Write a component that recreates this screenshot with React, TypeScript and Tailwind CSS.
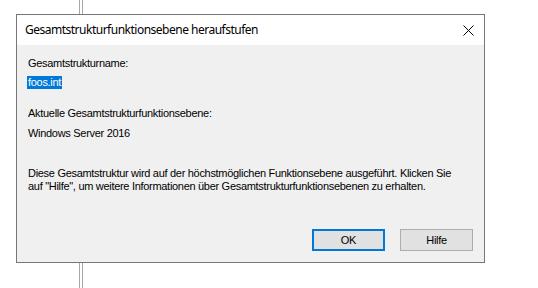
import React from "react";

export default function App() {
  return (
    <div className="relative w-[538px] h-[288px] bg-white overflow-hidden" style={{ fontFamily: '"Liberation Sans", Arial, sans-serif' }}>
      {/* background window edge behind dialog */}
      <div className="absolute left-[79px] top-0 h-full w-[4px] border-l border-r border-[#a8a8a8] bg-white" />
      <div className="relative pt-[14px] pl-[16px]">
        <div className="w-[469px] h-[249px] border border-[#777777] bg-[#f0f0f0] flex flex-col">
          <div className="h-[30px] bg-white flex items-center justify-between pl-[8px] pr-[10px]">
            <span className="text-[12px] text-black leading-none tracking-[-0.5px]" style={{ fontFamily: '"Noto Sans", "Open Sans", sans-serif' }}>
              Gesamtstrukturfunktionsebene heraufstufen
            </span>
            <svg width="11" height="11" viewBox="0 0 11 11">
              <path d="M0.5 0.5 L10.5 10.5 M10.5 0.5 L0.5 10.5" stroke="#000" strokeWidth="1" fill="none" />
            </svg>
          </div>
          <div className="flex flex-col flex-1 pl-[11px] pr-[11px] text-[11px] leading-[13px] tracking-[-0.3px] text-black">
            <div className="mt-[12px]">Gesamtstrukturname:</div>
            <div className="mt-[6px]">
              <span className="bg-[#0078d7] text-white inline-block ml-[-1px] px-[1px]">foos.int</span>
            </div>
            <div className="mt-[18px]">Aktuelle Gesamtstrukturfunktionsebene:</div>
            <div className="mt-[7px]">Windows Server 2016</div>
            <div className="mt-[27px]">
              Diese Gesamtstruktur wird auf der höchstmöglichen Funktionsebene ausgeführt. Klicken Sie
              <br />
              auf "Hilfe", um weitere Informationen über Gesamtstrukturfunktionsebenen zu erhalten.
            </div>
            <div className="mt-auto mb-[11px] flex justify-end gap-[15px]">
              <button className="w-[73px] h-[22px] bg-[#e1e1e1] border-2 border-[#0078d7] text-[11px] text-black flex items-center justify-center">
                OK
              </button>
              <button className="w-[73px] h-[22px] bg-[#e1e1e1] border border-[#adadad] text-[11px] text-black flex items-center justify-center">
                Hilfe
              </button>
            </div>
          </div>
        </div>
      </div>
    </div>
  );
}
